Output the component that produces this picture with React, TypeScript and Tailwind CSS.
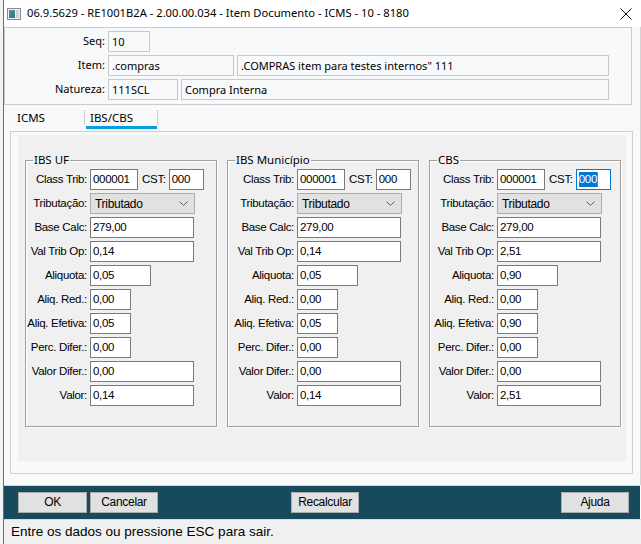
import React from "react";

const ui = "font-['Noto_Sans',sans-serif]";
const narrow = "font-['Liberation_Sans',Arial,sans-serif] tracking-[-0.3px] whitespace-nowrap";

type Group = {
  title: string;
  labelW: number;
  classTrib: string;
  cst: string;
  focused?: boolean;
  values: string[];
};

const groups: Group[] = [
  {
    title: "IBS UF",
    labelW: 61,
    classTrib: "000001",
    cst: "000",
    values: ["279,00", "0,14", "0,05", "0,00", "0,05", "0,00", "0,00", "0,14"],
  },
  {
    title: "IBS Município",
    labelW: 66,
    classTrib: "000001",
    cst: "000",
    values: ["279,00", "0,14", "0,05", "0,00", "0,05", "0,00", "0,00", "0,14"],
  },
  {
    title: "CBS",
    labelW: 64,
    classTrib: "000001",
    cst: "000",
    focused: true,
    values: ["279,00", "2,51", "0,90", "0,00", "0,90", "0,00", "0,00", "2,51"],
  },
];

const rows: { label: string; w: string }[] = [
  { label: "Base Calc:", w: "w-[104px]" },
  { label: "Val Trib Op:", w: "w-[104px]" },
  { label: "Aliquota:", w: "w-[61px]" },
  { label: "Aliq. Red.:", w: "w-[41px]" },
  { label: "Aliq. Efetiva:", w: "w-[41px]" },
  { label: "Perc. Difer.:", w: "w-[41px]" },
  { label: "Valor Difer.:", w: "w-[104px]" },
  { label: "Valor:", w: "w-[104px]" },
];

function Field({ value, w }: { value: string; w: string }) {
  return (
    <div
      className={`h-[21px] ${w} border border-[#7a7a7a] bg-white pl-[2px] text-[11.5px] leading-[19px] text-black ${narrow}`}
    >
      {value}
    </div>
  );
}

function Label({ text, w }: { text: string; w: number }) {
  return (
    <div
      className={`shrink-0 text-right text-[11.5px] leading-[21px] text-black ${narrow}`}
      style={{ width: w }}
    >
      {text}
    </div>
  );
}

function TaxGroup({ g }: { g: Group }) {
  return (
    <fieldset className="h-[274px] border border-[#a0a0a0] shadow-[1px_1px_0_#ffffff,inset_1px_1px_0_#ffffff]">
      <legend className={`ml-[7px] px-[1px] text-[11.5px] leading-[14px] text-black ${ui}`}>
        {g.title}
      </legend>
      <div className="flex flex-col gap-[3px] pt-[2px]">
        <div className="flex items-center gap-[3px]">
          <Label text="Class Trib:" w={g.labelW} />
          <Field value={g.classTrib} w="w-[48px]" />
          <div className={`ml-[1px] text-[11.5px] leading-[21px] ${narrow}`}>CST:</div>
          {g.focused ? (
            <div
              className={`flex h-[21px] w-[35px] items-center border border-[#0078d7] bg-white pl-[2px] text-[11.5px] ${narrow}`}
            >
              <span className="bg-[#0078d7] leading-[15px] text-white">{g.cst}</span>
              <span className="h-[15px] w-px bg-[#d46b08]" />
            </div>
          ) : (
            <Field value={g.cst} w="w-[35px]" />
          )}
        </div>
        <div className="flex items-center gap-[3px]">
          <Label text="Tributação:" w={g.labelW} />
          <div
            className={`flex h-[21px] w-[105px] items-center justify-between border border-[#adadad] bg-[#e1e1e1] pl-[4px] pr-[6px] text-[12px] ${narrow}`}
          >
            <span>Tributado</span>
            <svg width="9" height="5" viewBox="0 0 9 5" fill="none">
              <path d="M0.5 0.5L4.5 4.5L8.5 0.5" stroke="#606060" strokeWidth="1" />
            </svg>
          </div>
        </div>
        {rows.map((r, i) => (
          <div key={r.label} className="flex items-center gap-[3px]">
            <Label text={r.label} w={g.labelW} />
            <Field value={g.values[i]} w={r.w} />
          </div>
        ))}
      </div>
    </fieldset>
  );
}

function HeaderField({ value, w }: { value: string; w: string }) {
  return (
    <div
      className={`h-[21px] ${w} border border-[#c9c9c9] bg-[#f8f9fb] pl-[3px] text-[11px] leading-[19px] text-black ${ui}`}
    >
      {value}
    </div>
  );
}

function Button({ text, className = "" }: { text: string; className?: string }) {
  return (
    <button
      className={`h-[21px] border border-[#adadad] bg-[#e1e1e1] text-[12px] leading-[19px] text-black ${narrow} ${className}`}
    >
      {text}
    </button>
  );
}

export default function App() {
  return (
    <div className="flex h-[544px] w-[641px] overflow-hidden bg-white">
      <div className="w-[3px] shrink-0 bg-[#f3f3f3]" />
      <div className="flex w-[638px] flex-col border-l border-[#6e6e6e]">
        {/* title bar */}
        <div className="flex h-[27px] items-center bg-white pl-[3px] pr-[9px]">
          <svg width="14" height="12" viewBox="0 0 14 12" className="shrink-0">
            <defs>
              <linearGradient id="ic" x1="0" y1="0" x2="1" y2="1">
                <stop offset="0" stopColor="#4f9a7b" />
                <stop offset="1" stopColor="#2d6f9a" />
              </linearGradient>
            </defs>
            <rect x="0.5" y="0.5" width="13" height="11" fill="#f2f2f2" stroke="#8a8a8a" />
            <rect x="2" y="2" width="6" height="8" fill="url(#ic)" />
            <rect x="9" y="2" width="3" height="8" fill="#c8d2d8" />
          </svg>
          <div className={`ml-[6px] text-[11.2px] text-black ${ui}`}>
            06.9.5629 - RE1001B2A - 2.00.00.034 - Item Documento - ICMS - 10 - 8180
          </div>
          <div className="flex-1" />
          <svg width="12" height="12" viewBox="0 0 12 12">
            <path d="M0.5 0.5L11.5 11.5M11.5 0.5L0.5 11.5" stroke="#111" strokeWidth="1" />
          </svg>
        </div>

        {/* body */}
        <div className="flex h-[458px] flex-col border-r border-[#d4d4d4] bg-[#f8f9fb]">
          <div className="flex h-[78px] w-[628px] flex-col gap-[3px] border border-[#cbcbcb] pt-[3px]">
            <div className="flex items-center gap-[3px]">
              <div className={`w-[100px] text-right text-[11px] ${ui}`}>Seq:</div>
              <HeaderField value="10" w="w-[42px]" />
            </div>
            <div className="flex items-center gap-[3px]">
              <div className={`w-[100px] text-right text-[11px] ${ui}`}>Item:</div>
              <HeaderField value=".compras" w="w-[126px]" />
              <HeaderField value={'.COMPRAS item para testes internos" 111'} w="w-[372px]" />
            </div>
            <div className="flex items-center gap-[3px]">
              <div className={`w-[100px] text-right text-[11px] ${ui}`}>Natureza:</div>
              <HeaderField value="111SCL" w="w-[70px]" />
              <HeaderField value="Compra Interna" w="w-[428px]" />
            </div>
          </div>

          {/* tabs */}
          <div className={`flex h-[26px] text-[11.5px] text-black ${ui}`}>
            <div className="w-[80px] pl-[13px] pt-[4px] leading-[17px]">ICMS</div>
            <div className="mt-[5px] h-[15px] w-px bg-[#cfcfcf]" />
            <div className="flex w-[72px] flex-col">
              <div className="h-[21px] pl-[5px] pt-[4px] leading-[17px]">IBS/CBS</div>
              <div className="ml-[1px] h-[3px] bg-[#0a9be0]" />
            </div>
            <div className="mt-[5px] h-[15px] w-px bg-[#cfcfcf]" />
          </div>

          {/* tab panel */}
          <div className="ml-[6px] h-[343px] w-[623px] border border-[#d0d0d0] pb-[12px] pl-[7px] pr-[6px] pt-[3px]">
            <div className="grid h-full grid-cols-3 gap-[10px] bg-[#f0f0f0] pl-[7px] pr-[5px] pt-[18px]">
              {groups.map((g) => (
                <TaxGroup key={g.title} g={g} />
              ))}
            </div>
          </div>
        </div>

        {/* buttons */}
        <div className="flex h-[34px] w-[636px] items-center border-t border-[#d6d6d6] bg-[#174a5c] pl-[14px] pr-[11px]">
          <Button text="OK" className="w-[69px]" />
          <Button text="Cancelar" className="ml-[3px] w-[68px]" />
          <Button text="Recalcular" className="ml-[133px] w-[68px]" />
          <div className="flex-1" />
          <Button text="Ajuda" className="w-[68px]" />
        </div>

        {/* status bar */}
        <div className="flex flex-1 items-center border-t border-[#dcdcdc] bg-[#f0f0f0] pl-[7px]">
          <span className="text-[13.5px] text-black font-['Liberation_Sans',sans-serif]">
            Entre os dados ou pressione ESC para sair.
          </span>
        </div>
      </div>
    </div>
  );
}
